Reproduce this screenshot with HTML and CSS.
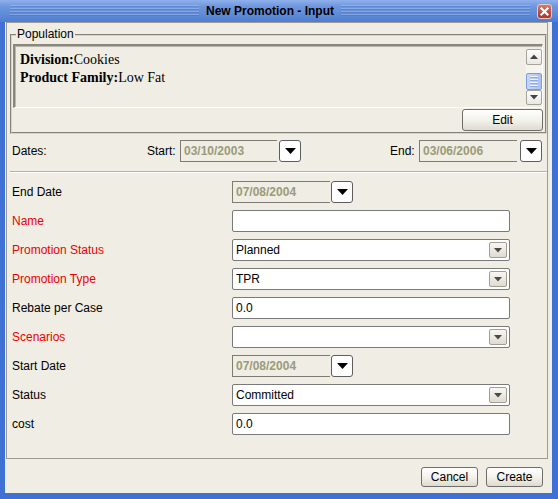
FILE: index.html
```html
<!DOCTYPE html>
<html>
<head>
<meta charset="utf-8">
<link rel="stylesheet" href="styles.css">
</head>
<body>
<div class="window">
  <div class="titlebar">
    <div class="stripes"></div>
    <div class="title">New Promotion - Input</div>
    <div class="stripes"></div>
    <div class="close">
      <svg width="15" height="15" viewBox="0 0 15 15">
        <path d="M4.5 4.5 L10.5 10.5 M10.5 4.5 L4.5 10.5" stroke="#fff" stroke-width="2.2" stroke-linecap="square"/>
      </svg>
    </div>
  </div>
  <div class="client">
    <div class="panel">
      <fieldset class="population">
        <legend>Population</legend>
        <div class="scrollpane">
          <div class="textarea">
            <div class="line"><b>Division:</b>Cookies</div>
            <div class="line"><b>Product Family:</b>Low Fat</div>
          </div>
          <div class="vscroll">
            <div class="sbtn">
              <svg width="8" height="5" viewBox="0 0 8 5"><polygon points="0,5 8,5 4,0.5" fill="#444"/></svg>
            </div>
            <div class="track"><div class="thumb"><span></span><span></span><span></span><span></span></div></div>
            <div class="sbtn">
              <svg width="8" height="5" viewBox="0 0 8 5"><polygon points="0,0 8,0 4,4.5" fill="#444"/></svg>
            </div>
          </div>
        </div>
        <div class="edit-row"><div class="btn edit">Edit</div></div>
      </fieldset>

      <div class="dates-row">
        <div class="dates-label">Dates:</div>
        <div class="start-label">Start:</div>
        <div class="datefield w97">03/10/2003</div>
        <div class="dropbtn"><svg width="11" height="6" viewBox="0 0 11 6"><polygon points="0,0 11,0 5.5,6" fill="#000"/></svg></div>
        <div class="end-label">End:</div>
        <div class="datefield w98">03/06/2006</div>
        <div class="dropbtn gap3"><svg width="11" height="6" viewBox="0 0 11 6"><polygon points="0,0 11,0 5.5,6" fill="#000"/></svg></div>
      </div>

      <div class="separator"></div>

      <div class="form">
        <div class="row">
          <div class="label">End Date</div>
          <div class="datefield w98">07/08/2004</div>
          <div class="dropbtn gap1"><svg width="11" height="6" viewBox="0 0 11 6"><polygon points="0,0 11,0 5.5,6" fill="#000"/></svg></div>
        </div>
        <div class="row">
          <div class="label req">Name</div>
          <div class="textfield"></div>
        </div>
        <div class="row">
          <div class="label req">Promotion Status</div>
          <div class="combo"><span class="value">Planned</span><div class="cbtn"><svg width="8" height="5" viewBox="0 0 8 5"><polygon points="0,0 8,0 4,4.5" fill="#4a4a4a"/></svg></div></div>
        </div>
        <div class="row">
          <div class="label req">Promotion Type</div>
          <div class="combo"><span class="value">TPR</span><div class="cbtn"><svg width="8" height="5" viewBox="0 0 8 5"><polygon points="0,0 8,0 4,4.5" fill="#4a4a4a"/></svg></div></div>
        </div>
        <div class="row">
          <div class="label">Rebate per Case</div>
          <div class="textfield">0.0</div>
        </div>
        <div class="row">
          <div class="label req">Scenarios</div>
          <div class="combo"><span class="value"></span><div class="cbtn"><svg width="8" height="5" viewBox="0 0 8 5"><polygon points="0,0 8,0 4,4.5" fill="#4a4a4a"/></svg></div></div>
        </div>
        <div class="row">
          <div class="label">Start Date</div>
          <div class="datefield w98">07/08/2004</div>
          <div class="dropbtn gap1"><svg width="11" height="6" viewBox="0 0 11 6"><polygon points="0,0 11,0 5.5,6" fill="#000"/></svg></div>
        </div>
        <div class="row">
          <div class="label">Status</div>
          <div class="combo"><span class="value">Committed</span><div class="cbtn"><svg width="8" height="5" viewBox="0 0 8 5"><polygon points="0,0 8,0 4,4.5" fill="#4a4a4a"/></svg></div></div>
        </div>
        <div class="row">
          <div class="label">cost</div>
          <div class="textfield">0.0</div>
        </div>
      </div>
    </div>
    <div class="buttons">
      <div class="btn dlg">Cancel</div>
      <div class="btn dlg">Create</div>
    </div>
  </div>
</div>
</body>
</html>
```

FILE: styles.css
```css
* { box-sizing: border-box; }
html, body { margin: 0; padding: 0; }
body {
  width: 558px;
  height: 499px;
  overflow: hidden;
  font-family: "Liberation Sans", Arial, sans-serif;
  font-size: 12px;
  color: #000;
  background: #fff;
}
.window {
  width: 558px;
  height: 499px;
  background: #3f70d4;
  display: flex;
  flex-direction: column;
}
.titlebar {
  height: 22px;
  flex: none;
  display: flex;
  align-items: center;
  padding: 0 6px 0 10px;
  background: linear-gradient(#8fb1ec, #6d96dd 30%, #5f8bd8 65%, #4d7dd2);
}
.stripes {
  flex: 1;
  height: 12px;
  background: repeating-linear-gradient(to bottom, rgba(255,255,255,0.22) 0 1px, rgba(30,70,160,0.18) 1px 2px, transparent 2px 3px);
}
.title {
  font-weight: bold;
  font-size: 12px;
  padding: 0 7px;
  line-height: 14px;
  color: #000;
}
.close {
  width: 15px;
  height: 15px;
  margin-left: 7px;
  border-radius: 3px;
  border: 1px solid #f0c8c0;
  background: linear-gradient(#dc7a6a, #c24a3c 55%, #a93a2e);
  display: flex;
  align-items: center;
  justify-content: center;
}
.close svg { display: block; margin: -1px; }

.client {
  flex: 1;
  margin: 0 6px 6px 5px;
  background: #efede4;
  display: flex;
  flex-direction: column;
}
.panel {
  margin-left: 1px;
  width: 542px;
  height: 437px;
  flex: none;
  border: 1px solid #9e9c90;
}

.population {
  margin: 5px 0 0 3px;
  width: 537px;
  padding: 3px 2px 1px 1px;
  border: 2px groove #d8d5c6;
  min-width: 0;
}
.population legend {
  padding: 0 1px;
  margin-left: 3px;
  line-height: 13px;
  font-size: 12px;
}
.scrollpane {
  height: 64px;
  display: flex;
  border-top: 2px solid #8a887e;
  border-left: 2px solid #8a887e;
  border-bottom: 1px solid #fff;
  border-right: 1px solid #fff;
  box-shadow: inset 1px 1px 0 #b9b7ab;
}
.textarea {
  flex: 1;
  padding: 5px 0 0 5px;
  font-family: "Liberation Serif", "Times New Roman", serif;
  font-size: 14px;
}
.textarea .line { line-height: 18px; height: 18px; }
.vscroll {
  width: 16px;
  display: flex;
  flex-direction: column;
  padding: 3px 0 2px;
}
.sbtn {
  width: 16px;
  height: 16px;
  border: 1px solid #a6a498;
  border-radius: 2px;
  background: linear-gradient(#fdfdfb, #e9e8e1);
  display: flex;
  align-items: center;
  justify-content: center;
}
.track {
  flex: 1;
  padding-top: 8px;
  background: #f5f4ef;
}
.thumb {
  height: 17px;
  border: 1px solid #7b9de0;
  border-radius: 2px;
  background: linear-gradient(to right, #c7d7f8, #a9c1f2);
  display: flex;
  flex-direction: column;
  align-items: center;
  justify-content: center;
  gap: 1px;
}
.thumb span {
  display: block;
  width: 8px;
  height: 1px;
  background: #eef3fd;
  box-shadow: 0 1px 0 #8eaae4;
  margin-bottom: 1px;
}
.edit-row {
  display: flex;
  justify-content: flex-end;
  margin-top: 1px;
}
.btn {
  display: flex;
  align-items: center;
  justify-content: center;
  border: 1px solid #6e6d68;
  border-radius: 3px;
  background: linear-gradient(#ffffff, #f3f2ec 50%, #dedbd0);
  font-size: 12px;
}
.edit { width: 81px; height: 22px; }

.dates-row {
  margin-top: 6px;
  height: 22px;
  display: flex;
  align-items: center;
  padding-left: 5px;
}
.dates-label { width: 135px; }
.start-label { width: 33px; }
.end-label { width: 29px; margin-left: 89px; }

.datefield {
  height: 22px;
  display: flex;
  align-items: center;
  padding-left: 3px;
  font-weight: bold;
  color: #9b9b78;
  border-top: 1px solid #7c7b74;
  border-left: 1px solid #7c7b74;
  border-bottom: 1px solid #7c7b74;
  background: #efede4;
}
.w97 { width: 97px; }
.w98 { width: 98px; }
.dropbtn {
  width: 22px;
  height: 22px;
  margin-left: 2px;
  background: #fff;
  border: 1px solid #5e5e5e;
  border-radius: 3px;
  display: flex;
  align-items: center;
  justify-content: center;
}
.dropbtn.gap1 { margin-left: 1px; }
.dropbtn.gap3 { margin-left: 3px; }

.separator {
  margin: 9px 0 0 3px;
  height: 2px;
  border-top: 1px solid #b6b3a4;
  border-bottom: 1px solid #fff;
}

.form {
  margin-top: 8px;
  padding-left: 5px;
  display: flex;
  flex-direction: column;
  gap: 7px;
}
.row {
  height: 22px;
  display: flex;
  align-items: center;
}
.label { width: 220px; }
.label.req { color: #f00000; }
.textfield {
  width: 278px;
  height: 22px;
  background: #fff;
  border: 1px solid #7a7a7a;
  border-radius: 2px;
  padding-left: 3px;
  display: flex;
  align-items: center;
}
.combo {
  width: 278px;
  height: 22px;
  background: #fff;
  border: 1px solid #7a7a7a;
  border-radius: 2px;
  padding: 0 2px 0 3px;
  display: flex;
  align-items: center;
}
.combo .value { flex: 1; }
.cbtn {
  width: 18px;
  height: 16px;
  border: 1px solid #a19f94;
  border-radius: 2px;
  background: linear-gradient(#f8f7f3, #dedbd1);
  display: flex;
  align-items: center;
  justify-content: center;
}

.buttons {
  display: flex;
  justify-content: flex-end;
  gap: 8px;
  padding: 8px 9px 0 0;
}
.dlg { width: 57px; height: 20px; }
```
